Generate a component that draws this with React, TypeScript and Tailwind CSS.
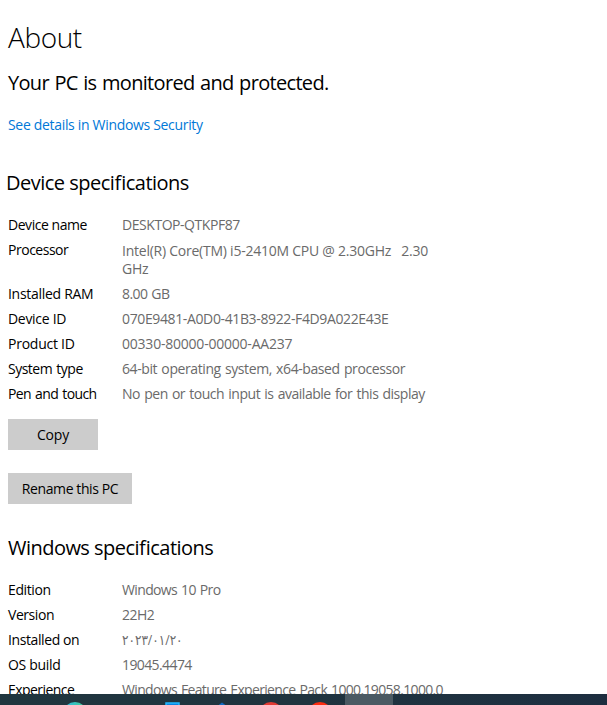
import React from 'react'

type SpecRow = {
    label: string;
    value: string;
    labelClass: string;
    valueClass: string;
};

const deviceSpecs: SpecRow[] = [
    { label: 'Device name', value: 'DESKTOP-QTKPF87', labelClass: 'tracking-[-0.45px]', valueClass: 'tracking-[-0.45px]' },
    { label: 'Processor', value: 'Intel(R) Core(TM) i5-2410M CPU @ 2.30GHz \u00a0 2.30\nGHz', labelClass: 'tracking-[-0.48px]', valueClass: 'tracking-[-0.24px] pt-[4.5px] leading-[18px] h-11' },
    { label: 'Installed RAM', value: '8.00 GB', labelClass: 'tracking-[-0.29px]', valueClass: 'tracking-[-0.6px] [word-spacing:1px]' },
    { label: 'Device ID', value: '070E9481-A0D0-41B3-8922-F4D9A022E43E', labelClass: 'tracking-[-0.3px]', valueClass: 'tracking-[-0.37px]' },
    { label: 'Product ID', value: '00330-80000-00000-AA237', labelClass: 'tracking-[-0.25px]', valueClass: 'tracking-[-0.22px]' },
    { label: 'System type', value: '64-bit operating system, x64-based processor', labelClass: 'tracking-[-0.5px] [word-spacing:1px]', valueClass: 'tracking-[-0.41px] [word-spacing:1px]' },
    { label: 'Pen and touch', value: 'No pen or touch input is available for this display', labelClass: 'tracking-[-0.6px] [word-spacing:1px]', valueClass: 'tracking-[-0.48px] [word-spacing:1px]' },
];

const windowsSpecs: SpecRow[] = [
    { label: 'Edition', value: 'Windows 10 Pro', labelClass: 'tracking-[-0.4px]', valueClass: 'tracking-[-0.64px] [word-spacing:1px]' },
    { label: 'Version', value: '22H2', labelClass: 'tracking-[-0.44px]', valueClass: 'tracking-[-0.5px]' },
    { label: 'Installed on', value: '٢٠٢٣/٠١/٢٠', labelClass: 'tracking-[-0.4px]', valueClass: 'origin-left scale-x-[0.86]' },
    { label: 'OS build', value: '19045.4474', labelClass: 'tracking-[-0.3px]', valueClass: 'tracking-[-0.6px]' },
    { label: 'Experience', value: 'Windows Feature Experience Pack 1000.19058.1000.0', labelClass: 'tracking-[-0.55px]', valueClass: 'tracking-[-0.66px] [word-spacing:1px]' },
];

function SpecList({ rows }: { rows: SpecRow[] }) {
    return (
        <dl className="text-[14px] leading-[25px]">
            {rows.map((row) => (
                <div key={row.label} className="flex whitespace-pre">
                    <dt className={`w-[114px] shrink-0 text-black ${row.labelClass}`}>
                        <span>{row.label}</span>
                    </dt>
                    <dd className={`text-[#6a6a6a] ${row.valueClass}`}>
                        <span>{row.value}</span>
                    </dd>
                </div>
            ))}
        </dl>
    )
}

function Taskbar() {
    return (
        <footer className="h-[11px] shrink-0 overflow-hidden bg-linear-to-r from-[#20363f] via-[#20343f] to-[#1d2e40]">
            <svg width="607" height="11" viewBox="0 0 607 11" aria-hidden="true">
                <defs>
                    <linearGradient id="edge" x1="0" x2="1">
                        <stop offset="0" stopColor="#2bb5e8" />
                        <stop offset="1" stopColor="#45cf8d" />
                    </linearGradient>
                </defs>
                <rect x="345" width="48" height="11" fill="#4b5a63" />
                <circle cx="75" cy="20" r="12" fill="url(#edge)" />
                <rect x="166" y="9" width="13" height="3" fill="#0a84e0" />
                <path d="M166 11V9h13v2" fill="none" stroke="#22b8ff" strokeWidth="1.5" />
                <path d="M216 13l6-4.5 6 4.5z" fill="#0f6cc4" />
                <circle cx="271" cy="20" r="12" fill="#e23b34" />
                <circle cx="320" cy="20" r="12" fill="#fb2b10" />
            </svg>
        </footer>
    )
}

function App() {
    return (
        <div className="flex h-[705px] w-[607px] flex-col overflow-hidden bg-white font-['Open_Sans','DejaVu_Sans',sans-serif] text-black">
            <main className="min-h-0 flex-1 overflow-hidden pl-2">
                <h1 className="pt-[17px] text-[28px] leading-10 font-light tracking-[-0.4px]">
                    <span>About</span>
                </h1>
                <h2 className="mt-[13px] text-[20px] leading-[26px] tracking-[-0.68px] [word-spacing:1px]">
                    <span>Your PC is monitored and protected.</span>
                </h2>
                <a href="#" className="mt-[19px] block w-fit text-[14px] leading-5 tracking-[-0.32px] text-[#0078d7]">
                    See details in Windows Security
                </a>
                <h2 className="mt-[34px] -ml-[2px] text-[20px] leading-[28px] tracking-[-0.5px] [font-feature-settings:'liga']">
                    <span>Device specifications</span>
                </h2>
                <div className="mt-[15px]">
                    <SpecList rows={deviceSpecs} />
                </div>
                <button className="mt-[13px] block h-[31px] w-[90px] bg-[#cccccc] text-[14px] tracking-[-0.15px]">Copy</button>
                <button className="mt-[23px] block h-[31px] w-[124px] bg-[#cccccc] text-[14px] tracking-[-0.4px]">Rename this PC</button>
                <h2 className="mt-[30px] text-[20px] leading-[28px] tracking-[-0.53px] [font-feature-settings:'liga']">
                    <span>Windows specifications</span>
                </h2>
                <div className="mt-[15px]">
                    <SpecList rows={windowsSpecs} />
                </div>
            </main>
            <Taskbar />
        </div>
    )
}

export default App
